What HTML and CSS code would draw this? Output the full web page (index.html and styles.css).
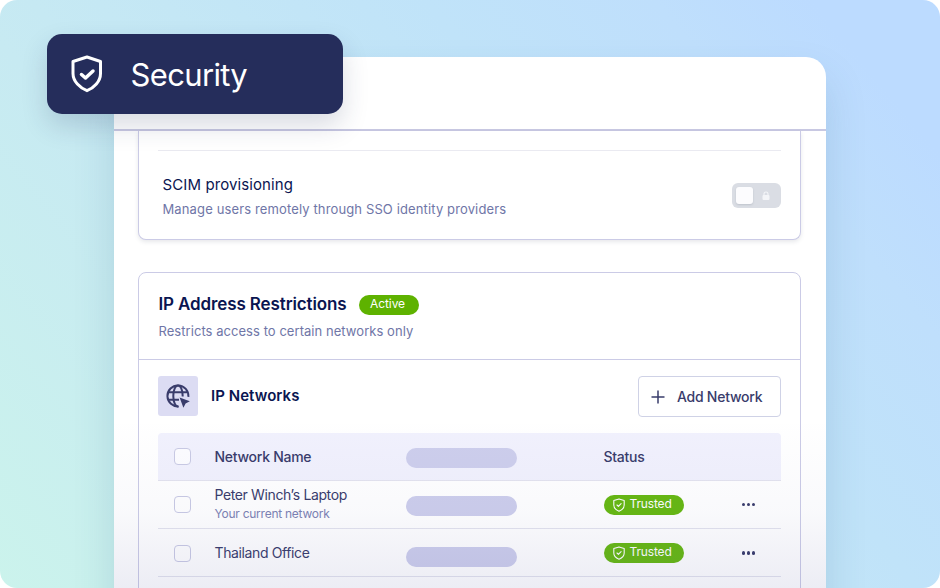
FILE: index.html
```
<!DOCTYPE html>
<html lang="en">
<head>
    <meta charset="UTF-8">
    <meta name="viewport" content="width=device-width, initial-scale=1.0">
    <title>Security</title>
    <link rel="stylesheet" href="styles.css">
</head>
<body>
    <div class="stage">
        <div class="panel">
            <div class="panel-header"></div>
            <div class="panel-body">
                <div class="card scim-card">
                    <div class="scim-row">
                        <div>
                            <h3 class="scim-title">SCIM provisioning</h3>
                            <p class="scim-text">Manage users remotely through SSO identity providers</p>
                        </div>
                        <div class="toggle">
                            <span class="knob"></span>
                            <svg class="lock" viewBox="0 0 8 10" width="8" height="10">
                                <path d="M2 5V3a2 2 0 0 1 4 0v2" fill="none" stroke="#f4f5f8" stroke-width="1.1"/>
                                <rect x="0.5" y="4" width="7" height="5" rx="1" fill="#f4f5f8"/>
                            </svg>
                        </div>
                    </div>
                </div>

                <div class="card ip-card">
                    <div class="ip-header">
                        <div class="ip-title-row">
                            <h2 class="ip-title">IP Address Restrictions</h2>
                            <span class="active-pill">Active</span>
                        </div>
                        <p class="ip-text">Restricts access to certain networks only</p>
                    </div>
                    <div class="ip-body">
                        <div class="networks-row">
                            <div class="globe-box">
                                <svg viewBox="0 0 24 24" width="24" height="24" fill="none" stroke="#393c6b" stroke-width="2">
                                    <path d="M22.4 12.8A10.5 10.5 0 1 0 12.8 22.4"/>
                                    <path d="M16.7 12.4C16.7 5.5 14.5 1.5 12 1.5S7.3 5.5 7.3 12S9.5 22.5 12 22.5"/>
                                    <path d="M2.5 8.3H21.5M2.5 15.7H13"/>
                                    <path d="M13.6 13.6L23.8 17.2L19.6 19.4L17.4 23.8Z" fill="#393c6b" stroke="none"/>
                                </svg>
                            </div>
                            <h3 class="networks-title">IP Networks</h3>
                            <button class="add-btn">
                                <svg viewBox="0 0 14 14" width="14" height="14"><path d="M7 0.5V13.5M0.5 7H13.5" stroke="#393c6b" stroke-width="1.5"/></svg>
                                <span>Add Network</span>
                            </button>
                        </div>

                        <div class="table">
                            <div class="row head">
                                <span class="check"></span>
                                <span class="head-name">Network Name</span>
                                <span class="bar"></span>
                                <span class="head-status">Status</span>
                            </div>
                            <div class="row">
                                <span class="check"></span>
                                <div class="name-cell">
                                    <span class="name laptop">Peter Winch’s Laptop</span>
                                    <span class="sub">Your current network</span>
                                </div>
                                <span class="bar"></span>
                                <span class="trusted">
                                    <svg viewBox="0 0 12 14" width="12" height="14" fill="none" stroke="#fff" stroke-width="1.1" stroke-linejoin="round" stroke-linecap="round"><path d="M6 0.9L11.2 2.6V7C11.2 10 9 12 6 13.2C3 12 0.8 10 0.8 7V2.6Z"/><path d="M4 7L5.4 8.4L8.1 5.7"/></svg>
                                    <span class="trusted-text">Trusted</span>
                                </span>
                                <span class="dots"><i></i><i></i><i></i></span>
                            </div>
                            <div class="row last">
                                <span class="check"></span>
                                <div class="name-cell">
                                    <span class="name office">Thailand Office</span>
                                </div>
                                <span class="bar"></span>
                                <span class="trusted">
                                    <svg viewBox="0 0 12 14" width="12" height="14" fill="none" stroke="#fff" stroke-width="1.1" stroke-linejoin="round" stroke-linecap="round"><path d="M6 0.9L11.2 2.6V7C11.2 10 9 12 6 13.2C3 12 0.8 10 0.8 7V2.6Z"/><path d="M4 7L5.4 8.4L8.1 5.7"/></svg>
                                    <span class="trusted-text">Trusted</span>
                                </span>
                                <span class="dots"><i></i><i></i><i></i></span>
                            </div>
                        </div>
                    </div>
                </div>
            </div>
            <div class="fade"></div>
        </div>

        <div class="security-badge">
            <svg viewBox="0 0 32 38" width="32" height="38" fill="none" stroke="#fff" stroke-width="3" stroke-linejoin="round" stroke-linecap="round">
                <path d="M16 2L29.5 6.5V18.5C29.5 26.5 23 33 16 35.7C9 33 2 26.5 2 18.5V6.5Z"/>
                <path d="M10.5 19.5L14.5 23L22 16" stroke-width="3.5"/>
            </svg>
            <span>Security</span>
        </div>
    </div>
</body>
</html>
```
FILE: styles.css
```
* {
    box-sizing: border-box;
}
body {
    margin: 0;
    background: #fff;
    font-family: Inter, Arial, sans-serif;
    color: #0a1551;
}
h2, h3, p {
    margin: 0;
    white-space: nowrap;
}
.stage {
    position: relative;
    width: 940px;
    height: 588px;
    overflow: hidden;
    border-radius: 17px;
    padding: 57px 0 0 114px;
    background: linear-gradient(50deg, #cbf3ec 0%, #c7eaf2 32%, #c0e3f9 64%, #bfdffc 80%, #bcdbff 91%);
}
.panel {
    position: relative;
    width: 711.5px;
    height: 560px;
    border-radius: 20px 20px 0 0;
    background: #fff;
    box-shadow: 0 22px 40px rgba(40, 90, 130, 0.17);
}
.panel-header {
    height: 74px;
    border-bottom: 2px solid #c8c8e2;
}
.panel-body {
    padding: 0 24px;
}
.card {
    width: 663px;
    border: 1px solid #cbcbe6;
    border-radius: 8px;
    background: #fff;
}
.scim-card {
    height: 109px;
    border-top: none;
    border-radius: 0 0 8px 8px;
    padding: 19px 19px 0;
    box-shadow: 0 2px 4px rgba(84, 95, 111, 0.14);
}
.scim-row {
    display: flex;
    justify-content: space-between;
    border-top: 1.5px solid #eaeaf1;
    padding: 24px 0 0 4.5px;
}
.scim-title {
    font-size: 15px;
    font-weight: 400;
    line-height: 20px;
    letter-spacing: 0.1px;
}
.scim-text {
    margin-top: 5px;
    font-size: 13px;
    line-height: 18px;
    letter-spacing: 0.13px;
    color: #6f76a7;
}
.toggle {
    display: flex;
    align-items: center;
    gap: 9px;
    width: 49px;
    height: 25px;
    margin-top: 8px;
    padding-left: 4px;
    border-radius: 6px;
    background: #dadde4;
}
.knob {
    width: 17px;
    height: 17px;
    border-radius: 3px;
    background: #fcfcfe;
    box-shadow: 0 1px 2px rgba(84, 95, 111, 0.2);
}
.ip-card {
    margin-top: 32px;
    height: 360px;
}
.ip-header {
    height: 87px;
    padding: 19px 19px 0 19.5px;
    border-bottom: 1px solid #cbcbe6;
}
.ip-title-row {
    display: flex;
    align-items: center;
    gap: 12px;
}
.ip-title {
    width: 188px;
    font-size: 17px;
    font-weight: 600;
    line-height: 24px;
    letter-spacing: -0.12px;
}
.active-pill {
    width: 60px;
    height: 20px;
    margin-top: 1px;
    padding-right: 2px;
    border-radius: 10px;
    background: #5eb200;
    color: #fff;
    font-size: 12px;
    line-height: 18px;
    letter-spacing: -0.1px;
    text-align: center;
}
.ip-text {
    margin-top: 6px;
    font-size: 13px;
    line-height: 18px;
    letter-spacing: 0.05px;
    color: #6f76a7;
}
.ip-body {
    padding: 16px 19px 0;
}
.networks-row {
    display: flex;
    align-items: center;
}
.globe-box {
    display: flex;
    align-items: center;
    justify-content: center;
    width: 40px;
    height: 40px;
    margin-bottom: 1px;
    border-radius: 3px;
    background: #dcdcf3;
}
.networks-title {
    margin-left: 13px;
    margin-bottom: 1px;
    font-size: 15px;
    font-weight: 600;
    line-height: 20px;
    letter-spacing: 0.05px;
}
.add-btn {
    display: flex;
    align-items: center;
    gap: 12px;
    width: 143px;
    height: 41px;
    margin-left: auto;
    padding: 0 0 0 12px;
    border: 1.5px solid #cfd2e6;
    border-radius: 4px;
    background: #fff;
    color: #393c6b;
    font-family: inherit;
    font-size: 14px;
    font-weight: 500;
    letter-spacing: -0.25px;
    white-space: nowrap;
}
.table {
    margin-top: 16px;
    color: #393c6b;
}
.row {
    display: grid;
    grid-template-columns: 40.5px 191.5px 197.5px 138px 1fr;
    align-items: center;
    height: 48px;
    padding-left: 16px;
    border-bottom: 1px solid #e3e3ee;
    white-space: nowrap;
}
.head {
    border-radius: 4px 4px 0 0;
    background: #f1f1fd;
    font-size: 14px;
    font-weight: 500;
    letter-spacing: -0.27px;
}
.check {
    width: 17px;
    height: 17px;
    border: 1.5px solid #c9cae4;
    border-radius: 4px;
    background: rgba(255, 255, 255, 0.8);
}
.bar {
    width: 111px;
    height: 20px;
    margin-top: 2px;
    border-radius: 10px;
    background: #cdceec;
}
.last {
    padding-top: 1px;
}
.last .bar {
    margin-top: 8px;
}
.name-cell {
    display: flex;
    flex-direction: column;
}
.name {
    font-size: 14px;
    line-height: 18px;
    letter-spacing: -0.38px;
}
.laptop {
    margin-top: -1px;
}
.sub {
    margin-top: 1px;
    font-size: 12px;
    line-height: 17px;
    letter-spacing: -0.25px;
    color: #7c82b3;
}
.trusted {
    display: flex;
    align-items: center;
    gap: 5px;
    width: 80px;
    height: 20px;
    padding-left: 9px;
    border-radius: 10px;
    background: #66b811;
    color: #fff;
    font-size: 12px;
    line-height: 18px;
    letter-spacing: -0.15px;
}
.trusted-text {
    padding-bottom: 2px;
}
.dots {
    display: flex;
    gap: 1.5px;
}
.dots i {
    width: 3.5px;
    height: 3.5px;
    border-radius: 50%;
    background: #393c6b;
}
/* soft grey towards the bottom of the panel */
.fade {
    position: absolute;
    left: 0;
    right: 0;
    bottom: 29px;
    height: 170px;
    background: linear-gradient(rgba(70, 75, 150, 0), rgba(70, 75, 150, 0.03) 55%, rgba(70, 75, 150, 0.1));
}
.security-badge {
    position: absolute;
    left: 46.5px;
    top: 34px;
    display: flex;
    align-items: center;
    gap: 28px;
    width: 296px;
    height: 80px;
    padding-left: 24px;
    border-radius: 15px;
    background: #252d5b;
    box-shadow: 0 12px 26px rgba(37, 45, 91, 0.17);
    color: #fff;
    font-size: 31px;
    letter-spacing: -0.65px;
}
```
